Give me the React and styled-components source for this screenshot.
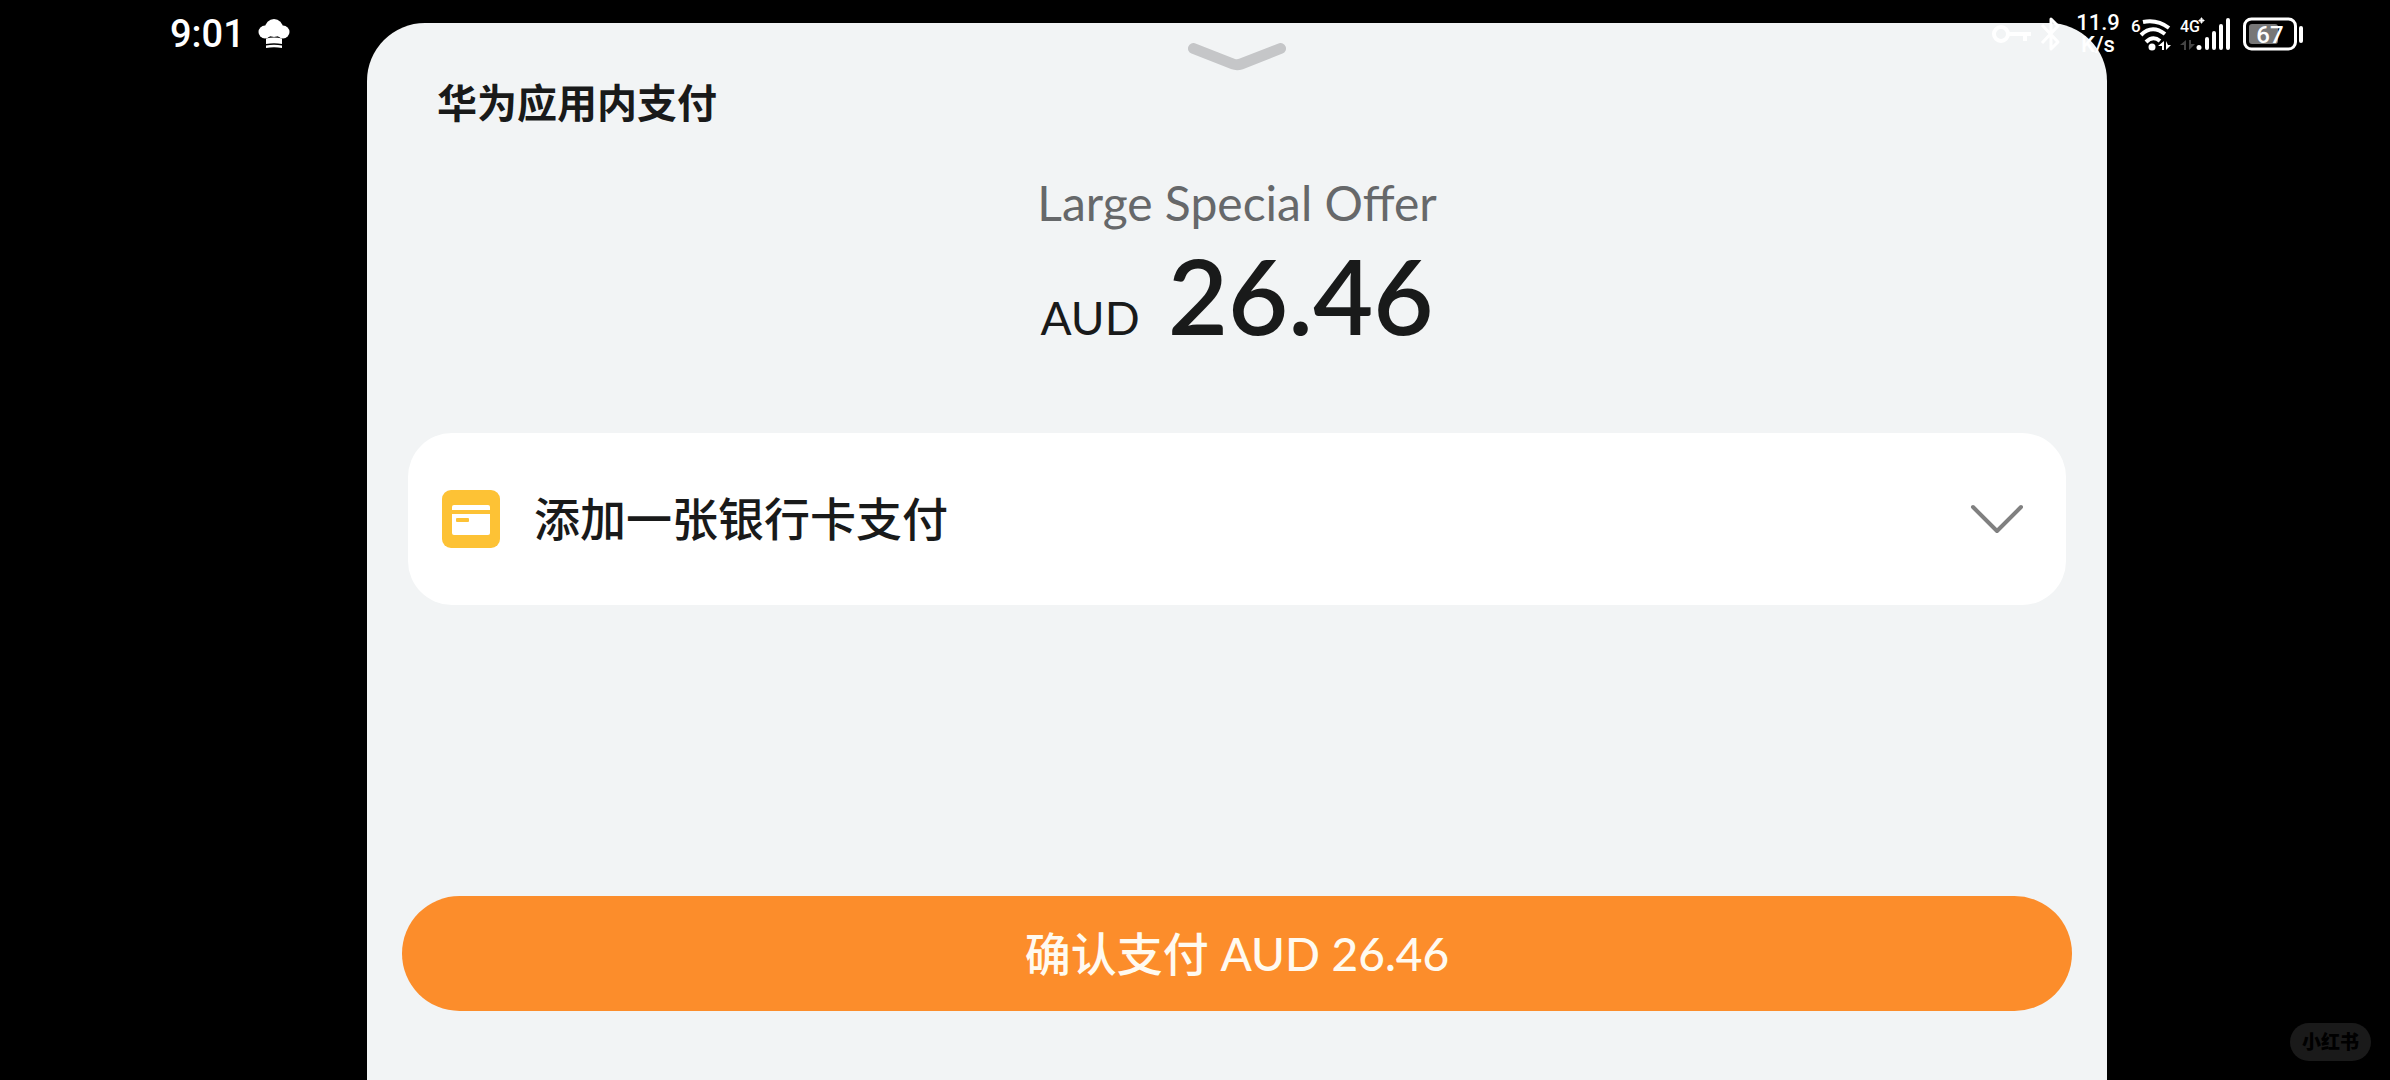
import React from 'react';
import styled, { createGlobalStyle } from 'styled-components';

const GlobalStyle = createGlobalStyle`
  * {
    box-sizing: border-box;
  }
  body {
    margin: 0;
    background: #000;
    font-family: Lato, 'Noto Sans CJK SC', sans-serif;
  }
  button {
    margin: 0;
    border: 0;
    font-family: inherit;
    cursor: pointer;
  }
  svg {
    display: block;
    flex: none;
  }
`;

const Page = styled.div`
  position: relative;
  display: flex;
  min-height: 100vh;
  padding: 23px 283px 0 367px;
`;

const StatusBar = styled.header`
  position: absolute;
  top: 0;
  left: 0;
  right: 0;
  display: flex;
  justify-content: space-between;
  padding: 12px 86px 0 170px;
  color: #fff;
  font-family: Roboto, sans-serif;
  font-weight: 500;
`;

const StatusGroup = styled.div`
  display: flex;
  align-items: center;
  height: 44px;
  gap: ${props => props.$gap}px;
`;

const Clock = styled.time`
  font-size: 38px;
  line-height: 44px;
`;

const Speed = styled.div`
  display: flex;
  flex-direction: column;
  align-items: center;
  width: 52px;
  padding-left: 4px;
  font-size: 22px;
  line-height: 22px;
`;

const Sheet = styled.main`
  flex: 1;
  display: flex;
  flex-direction: column;
  padding: 20px 35px 69px;
  border-radius: 58px 58px 0 0;
  background: #f2f4f5;
  color: #191a1a;
`;

const Handle = styled.button`
  align-self: center;
  padding: 0;
  background: none;
`;

const Title = styled.h1`
  margin: 2px 35px 0;
  font-size: 40px;
  font-weight: 700;
  line-height: 60px;
`;

const Summary = styled.section`
  display: flex;
  flex-direction: column;
  align-items: center;
  margin-top: 40px;
`;

const Product = styled.p`
  margin: 0;
  color: #66686a;
  font-size: 48px;
  line-height: 60px;
`;

const Price = styled.p`
  display: flex;
  align-items: baseline;
  gap: 28px;
  margin: 0;
  line-height: 124px;
`;

const Currency = styled.span`
  font-size: 46px;
`;

const Amount = styled.span`
  font-size: 104px;
  font-weight: 600;
`;

const PayMethod = styled.button`
  display: flex;
  align-items: center;
  gap: 34px;
  height: 172px;
  margin: 53px 6px 0;
  padding: 0 40px 0 34px;
  border-radius: 44px;
  background: #fff;
  color: #191a1a;
`;

const MethodName = styled.span`
  flex: 1;
  font-size: 46px;
  font-weight: 500;
  line-height: 60px;
  text-align: left;
`;

const Confirm = styled.button`
  height: 115px;
  margin-top: auto;
  border-radius: 58px;
  background: #fc8d2b;
  color: #fffaf0;
  font-size: 46px;
  font-weight: 500;
  line-height: 60px;
`;

const Watermark = styled.div`
  position: absolute;
  right: 19px;
  bottom: 19px;
  width: 81px;
  border-radius: 19px;
  background: #1a1a1a;
  color: #000;
  font-size: 19px;
  font-weight: 900;
  line-height: 38px;
  text-align: center;
`;

const ChefHat = () => (
  <svg width="32" height="30" viewBox="0 0 32 30" fill="#fff">
    <circle cx="16" cy="9" r="9" />
    <circle cx="7" cy="13" r="6.5" />
    <circle cx="25" cy="13" r="6.5" />
    <path d="M8 11h16v7q-8-2-16 0z" />
    <path d="M8 19.5q8-2 16 0v5.5q-8-1.500-16 0z" />
    <path d="M8 26.5q8-1.500 16 0v2.5q-8-1.500-16 0z" />
  </svg>
);

const KeyIcon = () => (
  <svg width="40" height="20" viewBox="0 0 40 20" fill="none" stroke="#fff" strokeWidth="4">
    <circle cx="9" cy="10" r="7" />
    <path d="M16 10h23M33 10v7" />
  </svg>
);

const BluetoothIcon = () => (
  <svg width="22" height="36" viewBox="0 0 22 36" fill="none" stroke="#fff" strokeWidth="3">
    <path d="M2 9l16 17-7 7V3l7 7L2 27" strokeLinejoin="round" />
  </svg>
);

const WifiIcon = () => (
  <svg width="42" height="36" viewBox="0 0 42 36" fill="#fff">
    <text x="1" y="16" fontSize="17" fontWeight="500">6</text>
    <g fill="none" stroke="#fff" strokeWidth="4">
      <path d="M13 6Q27 3 39 12" />
      <path d="M11 19Q22 8 35 18" />
      <path d="M16 26q7-7 14-1" />
    </g>
    <circle cx="22" cy="31" r="3.500" />
    <path d="M34 25v9h-2v-4h-4zM36 25v9l5-5h-3z" />
  </svg>
);

const SignalIcon = () => (
  <svg width="54" height="36" viewBox="0 0 54 36" fill="#fff">
    <text x="0" y="16" fontSize="16" fontWeight="500">4G</text>
    <path d="M21 2h1v2h2v1h-2v2h-1V5h-2V4h2z" stroke="#fff" />
    <path d="M6 24v10H4v-5H0zM9 24v10l6-6h-4v-4z" fill="#444" />
    <circle cx="19" cy="31.500" r="2.500" />
    <g stroke="#fff" strokeWidth="4" strokeLinecap="round">
      <path d="M27 23v9M34 17v15M41 10v22M48 4v28" />
    </g>
  </svg>
);

const BatteryIcon = () => (
  <svg width="62" height="34" viewBox="0 0 62 34">
    <rect x="2.500" y="2" width="51" height="30" rx="7" fill="none" stroke="#fff" strokeWidth="3" />
    <rect x="7" y="7" width="29" height="20" rx="3" fill="#777" />
    <rect x="57" y="9" width="4" height="17" rx="2" fill="#fff" />
    <text x="28" y="26" fontSize="24" fontWeight="500" textAnchor="middle" fill="#fff">67</text>
  </svg>
);

const SheetArrow = () => (
  <svg width="98" height="28" viewBox="0 0 98 28" fill="none">
    <path
      d="M5.500 5.500L45 21q4 1.500 8 0L92.500 5.500"
      stroke="#c5c6c8"
      strokeWidth="11"
      strokeLinecap="round"
    />
  </svg>
);

const CardIcon = () => (
  <svg width="58" height="58" viewBox="0 0 58 58">
    <rect width="58" height="58" rx="9" fill="#fdc235" />
    <path d="M12 15h34q2 0 2 2v3H10v-3q0-2 2-2z" fill="#fff" />
    <path d="M10 24h38v19q0 2-2 2H12q-2 0-2-2z" fill="#fff" />
    <rect x="14" y="28" width="13" height="4" rx="1" fill="#fdc235" />
  </svg>
);

const ChevronIcon = () => (
  <svg width="58" height="30" viewBox="0 0 58 30" fill="none">
    <path d="M5 3l24 24L53 3" stroke="#808080" strokeWidth="4" strokeLinecap="round" strokeLinejoin="round" />
  </svg>
);

const App = () => {
  const currency = 'AUD';
  const amount = '26.46';

  return (
    <>
      <GlobalStyle />
      <Page>
        <Sheet>
          <Handle type="button" aria-label="收起">
            <SheetArrow />
          </Handle>
          <Title>华为应用内支付</Title>
          <Summary>
            <Product>Large Special Offer</Product>
            <Price>
              <Currency>{currency}</Currency>
              <Amount>{amount}</Amount>
            </Price>
          </Summary>
          <PayMethod type="button" aria-expanded="false">
            <CardIcon />
            <MethodName>添加一张银行卡支付</MethodName>
            <ChevronIcon />
          </PayMethod>
          <Confirm type="button">
            确认支付 {currency} {amount}
          </Confirm>
        </Sheet>
        <StatusBar>
          <StatusGroup $gap={13}>
            <Clock>9:01</Clock>
            <ChefHat />
          </StatusGroup>
          <StatusGroup $gap={8}>
            <KeyIcon />
            <BluetoothIcon />
            <Speed>
              <span>11.9</span>
              <span>K/s</span>
            </Speed>
            <WifiIcon />
            <SignalIcon />
            <BatteryIcon />
          </StatusGroup>
        </StatusBar>
        <Watermark>小红书</Watermark>
      </Page>
    </>
  );
};

export default App;
